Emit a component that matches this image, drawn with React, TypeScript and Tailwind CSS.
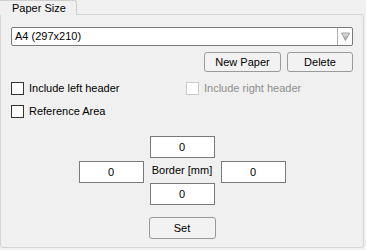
const font = { fontFamily: '"Liberation Sans", Arial, sans-serif' };

function Check({ label, disabled }: { label: string; disabled?: boolean }) {
  return (
    <label className="flex items-center gap-[5px] h-[13px]">
      <span
        className={`w-[13px] h-[13px] border bg-white ${
          disabled ? "border-[#cccccc]" : "border-[#333333]"
        }`}
      />
      <span className={disabled ? "text-[#8d8d8d]" : "text-black"}>{label}</span>
    </label>
  );
}

function Box({ value }: { value: string }) {
  return (
    <div className="w-[65px] h-[22px] bg-white border border-[#7a7a7a] flex items-center justify-center text-black">
      {value}
    </div>
  );
}

function Btn({ label, w, h = "h-[20px]" }: { label: string; w: string; h?: string }) {
  return (
    <button
      className={`${w} ${h} bg-[#f2f2f2] border border-[#9a9a9a] rounded-[3px] flex items-center justify-center text-black`}
    >
      {label}
    </button>
  );
}

export default function App() {
  return (
    <div className="w-[366px] h-[250px] bg-[#f0f0f0] text-[11px] relative" style={font}>
      {/* tab */}
      <div className="absolute left-0 top-0 w-[77px] h-[15px] border-t border-r border-[#cfcfcf] rounded-tr-[3px] bg-[#f0f0f0] pl-[12px] leading-[14px] text-black z-10">
        Paper Size
      </div>

      {/* pane */}
      <div className="absolute left-0 top-[14px] w-[364px] h-[234px] border border-[#d4d4d4] rounded-b-[3px] rounded-tr-[3px] px-[10px] pt-[12px] flex flex-col">
        <div className="h-[19px] bg-white border border-[#7a7a7a] rounded-[2px] flex items-stretch">
          <div className="flex-1 pl-[3px] flex items-center text-black">A4 (297x210)</div>
          <div className="w-[15px] border-l border-[#b0b0b0] flex items-center justify-center">
            <svg width="9" height="9" viewBox="0 0 9 9">
              <defs>
                <linearGradient id="tri" x1="0" y1="0" x2="0" y2="1">
                  <stop offset="0" stopColor="#e6e6e6" />
                  <stop offset="1" stopColor="#9c9c9c" />
                </linearGradient>
              </defs>
              <path d="M0.5 1 L8.5 1 L4.5 8.5 Z" fill="url(#tri)" stroke="#8a8a8a" strokeWidth="0.8" />
            </svg>
          </div>
        </div>

        <div className="flex justify-end gap-[6px] mt-[6px]">
          <Btn label="New Paper" w="w-[77px]" />
          <Btn label="Delete" w="w-[66px]" />
        </div>

        <div className="flex mt-[10px]">
          <div className="w-[175px]">
            <Check label="Include left header" />
          </div>
          <Check label="Include right header" disabled />
        </div>
        <div className="mt-[10px]">
          <Check label="Reference Area" />
        </div>

        <div className="flex justify-center items-center gap-[6px] mt-[18px]">
          <div className="mt-[3px]">
            <Box value="0" />
          </div>
          <div className="flex flex-col items-center">
            <Box value="0" />
            <div className="h-[25px] flex items-center text-black">Border [mm]</div>
            <Box value="0" />
          </div>
          <div className="mt-[3px]">
            <Box value="0" />
          </div>
        </div>

        <div className="flex justify-center mt-[12px]">
          <Btn label="Set" w="w-[67px]" h="h-[22px]" />
        </div>
      </div>
    </div>
  );
}
